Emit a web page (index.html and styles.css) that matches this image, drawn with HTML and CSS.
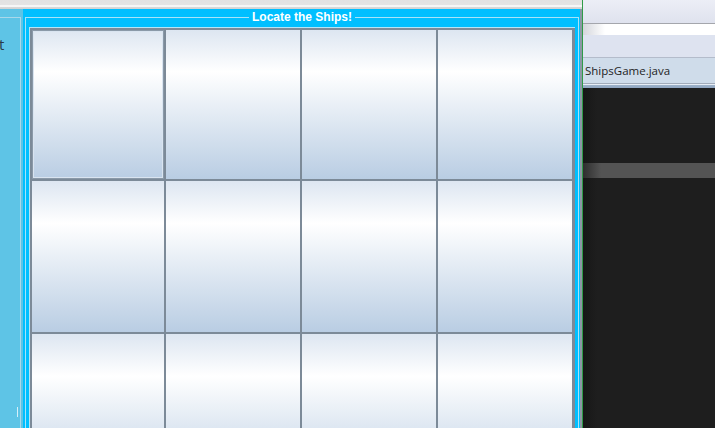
FILE: index.html
```html
<!DOCTYPE html>
<html>
<head>
<meta charset="utf-8">
<link rel="stylesheet" href="styles.css">
</head>
<body>
<div class="app">
  <div class="main-col">
    <div class="topstrip"></div>
    <div class="main-row">
      <div class="side">
        <div class="side-box"><span class="side-text">t</span></div>
        <span class="side-mark"></span>
      </div>
      <div class="window">
        <div class="fieldset">
          <span class="legend">Locate the Ships!</span>
          <div class="grid-wrap">
            <div class="grid">
              <button class="cell focused"></button>
              <button class="cell"></button>
              <button class="cell"></button>
              <button class="cell"></button>
              <button class="cell"></button>
              <button class="cell"></button>
              <button class="cell"></button>
              <button class="cell"></button>
              <button class="cell"></button>
              <button class="cell"></button>
              <button class="cell"></button>
              <button class="cell"></button>
            </div>
          </div>
        </div>
      </div>
    </div>
  </div>
  <div class="green"></div>
  <div class="ide">
    <div class="ide-top"></div>
    <div class="ide-white"></div>
    <div class="ide-bar"></div>
    <div class="ide-tab"><span class="tab-text">ShipsGame.java</span></div>
    <div class="ide-sep"></div>
    <div class="ide-dark">
      <div class="ide-band"></div>
    </div>
  </div>
</div>
</body>
</html>
```

FILE: styles.css
```css
html, body {
  margin: 0;
  padding: 0;
  width: 715px;
  height: 428px;
  overflow: hidden;
  font-family: "Liberation Sans", Arial, sans-serif;
}

.app {
  display: flex;
  width: 715px;
  height: 428px;
}

.main-col {
  width: 582px;
  display: flex;
  flex-direction: column;
  overflow: hidden;
}

.topstrip {
  height: 9px;
  flex: none;
  background: linear-gradient(to bottom, #e2e2e2 0px, #e4e4e4 5px, #f6f6f6 5px, #f6f6f6 7px, #d8d8d8 7px, #d2d2d2 9px);
}

.main-row {
  flex: 1;
  display: flex;
  min-height: 0;
}

.side {
  width: 23px;
  flex: none;
  background: #5ec4e6;
  position: relative;
  overflow: hidden;
}

.side-box {
  margin-top: 8px;
  width: 20px;
  height: 500px;
  border-top: 1px solid #a9d8ea;
  border-right: 1px solid #a9d8ea;
  overflow: hidden;
}

.side-text {
  display: block;
  margin-top: 18px;
  margin-left: -1px;
  font-family: "Open Sans", "Noto Sans", sans-serif;
  font-size: 15px;
  line-height: 16px;
  color: #2a3a48;
}

.side-mark {
  position: absolute;
  left: 17px;
  top: 398px;
  width: 1px;
  height: 10px;
  background: #d6eff9;
}

.window {
  width: 554px;
  flex: none;
  background: #00bfff;
  padding: 8px 1px 0 2px;
  border-right: 3px solid #8c98a4;
  overflow: hidden;
}

.fieldset {
  position: relative;
  border: 1px solid #a8e2f8;
  border-bottom: none;
  padding: 9px 3px 0 3px;
  height: 500px;
}

.legend {
  position: absolute;
  top: -9px;
  left: 0;
  right: 0;
  margin: 0 auto;
  width: max-content;
  padding: 0 3px;
  background: #00bfff;
  color: #ffffff;
  font-family: "Liberation Sans", Arial, sans-serif;
  font-weight: bold;
  font-size: 12px;
  line-height: 16px;
}

.grid-wrap {
  border-top: 1px solid #b4e4f6;
  border-left: 1px solid #b4e4f6;
}

.grid {
  display: grid;
  grid-template-columns: 132px 134px 134px 134px;
  grid-template-rows: 149px 151px 151px;
  gap: 2px;
  padding: 2px 2px 0 2px;
  background: #7c8a98;
}

.cell {
  border: none;
  padding: 0;
  margin: 0;
  background: linear-gradient(to bottom, #dde6f1 0%, #ffffff 28%, #b9cde3 100%);
}

.cell.focused {
  box-shadow: inset 0 0 0 1px #8a99a8, inset 0 0 0 2px #d9e4f0;
}

.green {
  width: 1px;
  flex: none;
  background: #2f9b47;
}

.ide {
  width: 132px;
  flex: none;
  display: flex;
  flex-direction: column;
  background: #1e1e1e;
  overflow: hidden;
}

.ide-top {
  height: 23px;
  flex: none;
  background: linear-gradient(to bottom, #eceef6, #dfe2ee);
  border-bottom: 1px solid #a4a6ac;
}

.ide-white {
  height: 11px;
  flex: none;
  background: linear-gradient(to right, #d4d6dc 0px, #ffffff 22px);
}

.ide-bar {
  height: 22px;
  flex: none;
  background: #dee3f0;
  border-bottom: 1px solid #b4bccb;
}

.ide-tab {
  height: 25px;
  flex: none;
  background: #cfdcea;
  border-bottom: 1px solid #a2acba;
  white-space: nowrap;
}

.tab-text {
  display: block;
  padding-left: 2px;
  font-family: "Open Sans", "Noto Sans", sans-serif;
  font-size: 11.5px;
  line-height: 25px;
  color: #1e1e1e;
}

.ide-sep {
  height: 4px;
  flex: none;
  background: linear-gradient(to bottom, #e8eef6 0px, #e8eef6 1px, #9fb3ca 1px, #8ea4bf 4px);
}

.ide-dark {
  flex: 1;
  background: linear-gradient(to right, #171717 0px, #1e1e1e 14px);
  padding-top: 75px;
}

.ide-band {
  height: 15px;
  background: linear-gradient(to right, #2e2e2e 0px, #545454 18px);
}
```
